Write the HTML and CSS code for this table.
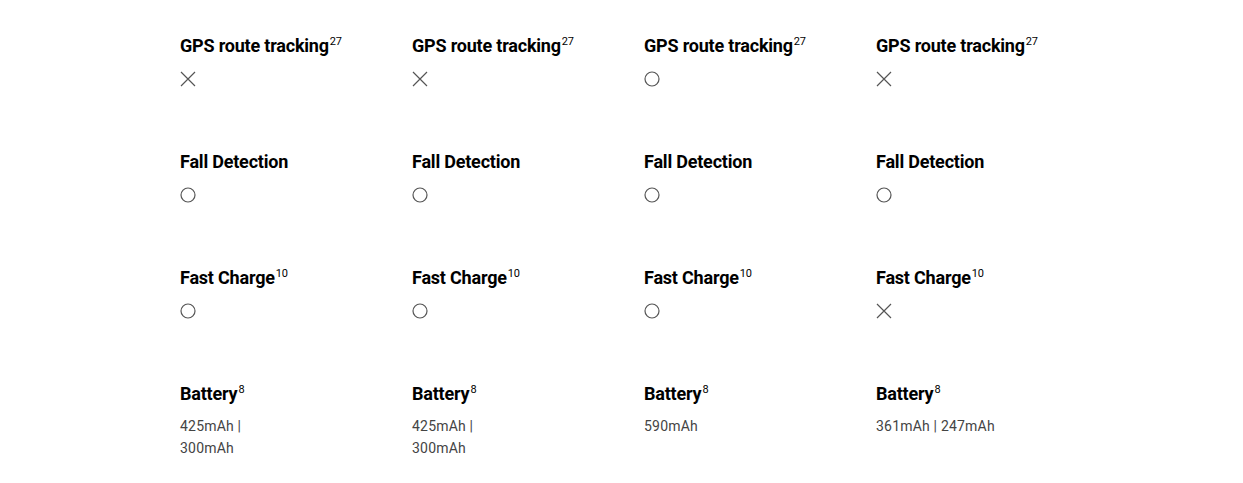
FILE: index.html
```html
<!DOCTYPE html>
<html lang="en">
<head>
<meta charset="utf-8">
<title>Compare</title>
<link rel="stylesheet" href="styles.css">
</head>
<body>
<div class="grid">
  <div class="cell"><h3 class="title">GPS route tracking<sup>27</sup></h3><svg class="icon" viewBox="0 0 16 16"><path d="M1 1L15 15M15 1L1 15"/></svg></div>
  <div class="cell"><h3 class="title">GPS route tracking<sup>27</sup></h3><svg class="icon" viewBox="0 0 16 16"><path d="M1 1L15 15M15 1L1 15"/></svg></div>
  <div class="cell"><h3 class="title">GPS route tracking<sup>27</sup></h3><svg class="icon" viewBox="0 0 16 16"><circle cx="8" cy="8" r="7"/></svg></div>
  <div class="cell"><h3 class="title">GPS route tracking<sup>27</sup></h3><svg class="icon" viewBox="0 0 16 16"><path d="M1 1L15 15M15 1L1 15"/></svg></div>

  <div class="cell"><h3 class="title">Fall Detection</h3><svg class="icon" viewBox="0 0 16 16"><circle cx="8" cy="8" r="7"/></svg></div>
  <div class="cell"><h3 class="title">Fall Detection</h3><svg class="icon" viewBox="0 0 16 16"><circle cx="8" cy="8" r="7"/></svg></div>
  <div class="cell"><h3 class="title">Fall Detection</h3><svg class="icon" viewBox="0 0 16 16"><circle cx="8" cy="8" r="7"/></svg></div>
  <div class="cell"><h3 class="title">Fall Detection</h3><svg class="icon" viewBox="0 0 16 16"><circle cx="8" cy="8" r="7"/></svg></div>

  <div class="cell"><h3 class="title">Fast Charge<sup>10</sup></h3><svg class="icon" viewBox="0 0 16 16"><circle cx="8" cy="8" r="7"/></svg></div>
  <div class="cell"><h3 class="title">Fast Charge<sup>10</sup></h3><svg class="icon" viewBox="0 0 16 16"><circle cx="8" cy="8" r="7"/></svg></div>
  <div class="cell"><h3 class="title">Fast Charge<sup>10</sup></h3><svg class="icon" viewBox="0 0 16 16"><circle cx="8" cy="8" r="7"/></svg></div>
  <div class="cell"><h3 class="title">Fast Charge<sup>10</sup></h3><svg class="icon" viewBox="0 0 16 16"><path d="M1 1L15 15M15 1L1 15"/></svg></div>

  <div class="cell"><h3 class="title">Battery<sup>8</sup></h3><p class="value">425mAh |<br>300mAh</p></div>
  <div class="cell"><h3 class="title">Battery<sup>8</sup></h3><p class="value">425mAh |<br>300mAh</p></div>
  <div class="cell"><h3 class="title">Battery<sup>8</sup></h3><p class="value">590mAh</p></div>
  <div class="cell"><h3 class="title">Battery<sup>8</sup></h3><p class="value">361mAh | 247mAh</p></div>
</div>
</body>
</html>
```

FILE: styles.css
```css
html, body {
  margin: 0;
  padding: 0;
  background: #fff;
}
body {
  font-family: Roboto, "Liberation Sans", sans-serif;
  color: #000;
}
.grid {
  display: grid;
  grid-template-columns: repeat(4, 232px);
  grid-auto-rows: 116px;
  padding: 34px 0 0 180px;
}
.cell {
  display: flex;
  flex-direction: column;
  align-items: flex-start;
  gap: 13px;
}
.title {
  margin: 0;
  font-size: 18px;
  line-height: 24px;
  font-weight: 700;
  letter-spacing: -0.2px;
  color: #000;
}
.title sup {
  font-size: 11px;
  font-weight: 400;
  vertical-align: top;
  line-height: 16px;
  margin-left: 1px;
}
.icon {
  width: 16px;
  height: 16px;
  fill: none;
  stroke: #555;
  stroke-width: 1.2;
}
.value {
  margin: 0;
  margin-top: -4px;
  font-size: 14px;
  line-height: 22px;
  letter-spacing: 0.2px;
  color: #444;
}
```
